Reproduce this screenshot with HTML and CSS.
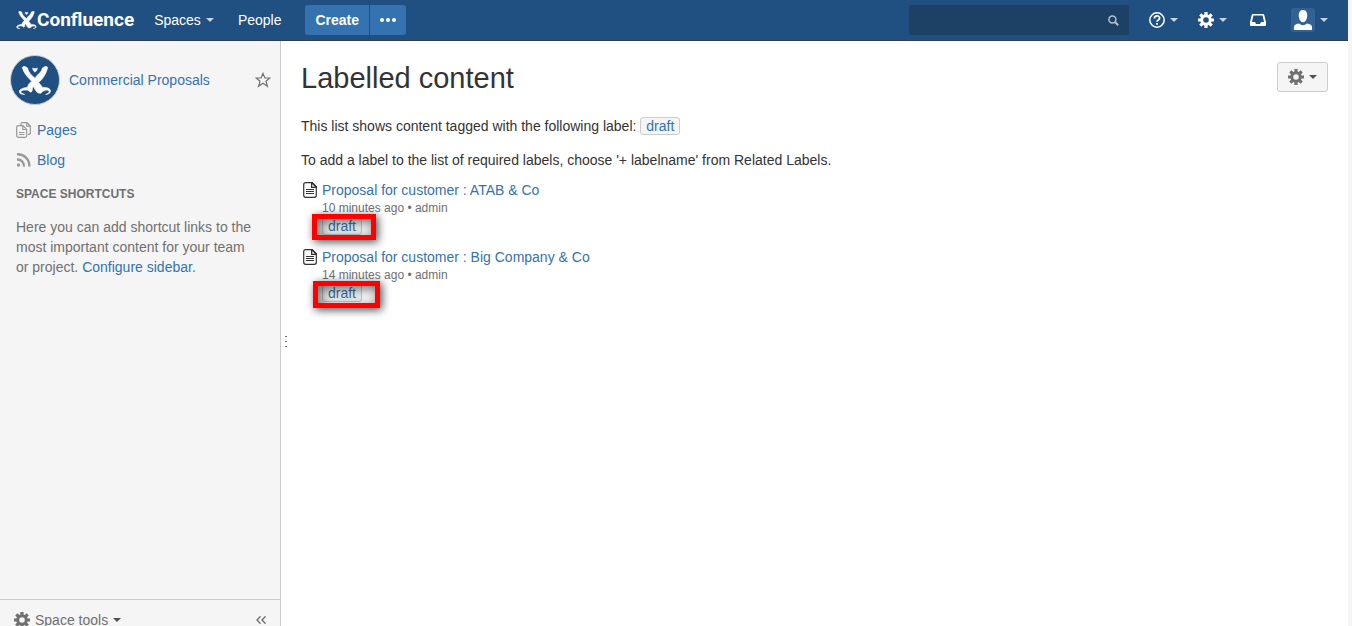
FILE: index.html
```html
<!DOCTYPE html>
<html lang="en">
<head>
<meta charset="utf-8">
<title>Labelled content - Confluence</title>
<link rel="stylesheet" href="styles.css">
</head>
<body>
<svg class="sprite" aria-hidden="true">
  <symbol id="mark" viewBox="16 20 96 86">
    <path fill="currentColor" stroke="currentColor" stroke-width="2" d="M26 24Q27 20 34 21L41 25C44 38 53 48 66 58L87 84C95 84 107 84 110 92C113 100 104 104 96 105C103 102 109 98 106 94C101 90 93 92 85 97L82 101Q74 103 68 96L59 81C55 84 57 90 55 95L51 98L43 92C34 91 25 92 22 95C19 99 25 102 33 105C23 105 15 102 17 94C20 87 33 85 42 83C43 75 48 70 54 65C43 54 30 41 26 24Z"/>
    <path fill="currentColor" stroke="currentColor" stroke-width="2" d="M102 24Q101 20 94 21L87 25C84 35 78 42 68 50L64 58L76 68C89 57 98 41 102 24ZM57 26Q64 29 71 26Q71 33 64 38Q57 33 57 26Z"/>
  </symbol>
  <symbol id="gear" viewBox="0 0 16 16">
    <circle cx="8" cy="8" r="4.3" fill="none" stroke="currentColor" stroke-width="3"/>
    <path fill="none" stroke="currentColor" stroke-width="3.2" d="M8 0V3M8 13V16M0 8H3M13 8H16M2.3 2.3L4.6 4.6M11.4 11.4L13.7 13.7M2.3 13.7L4.6 11.4M11.4 4.6L13.7 2.3"/>
  </symbol>
  <symbol id="page" viewBox="0 0 14 16">
    <path fill="#fff" stroke="currentColor" stroke-width="1.2" d="M2.7 .7H9L13.3 5V13.3Q13.3 15.3 11.3 15.3H2.7Q.7 15.3 .7 13.3V2.7Q.7 .7 2.7 .7Z"/>
    <path fill="currentColor" d="M8 0H9.5L14 4.5V6H8ZM9.3 2V4.7H12Z" fill-rule="evenodd"/>
    <path stroke="currentColor" d="M3 7.500H11M3 9.500H11M3 11.500H11"/>
  </symbol>
</svg>
<header class="topbar">
  <a class="logo" href="#"><svg width="21" height="18"><use href="#mark"/></svg><span>Confluence</span></a>
  <nav class="nav">
    <button class="nav-item" type="button">Spaces<i class="caret"></i></button>
    <a class="nav-item" href="#">People</a>
    <div class="create-group">
      <button class="create" type="button">Create</button>
      <button class="more" type="button" aria-label="Create from template"><svg width="16" height="4" fill="#fff"><circle cx="2" cy="2" r="2"/><circle cx="8" cy="2" r="2"/><circle cx="14" cy="2" r="2"/></svg></button>
    </div>
  </nav>
  <div class="search">
    <input type="search" aria-label="Search">
    <svg class="search-icon" width="11" height="11" viewBox="0 0 11 11" fill="none" stroke="currentColor"><circle cx="4.4" cy="4.4" r="3.5" stroke-width="1.5"/><path d="M7 7L10.2 10.2" stroke-width="2"/></svg>
  </div>
  <div class="tools">
    <button class="tool" type="button" aria-label="Help"><svg width="16" height="16" viewBox="0 0 16 16" fill="none" stroke="#fff"><circle cx="8" cy="8" r="7.2" stroke-width="1.5"/><path stroke-width="1.8" d="M5.4 6.6C5.4 3 10.6 3.1 10.6 6C10.6 8 8 7.8 8 9.8M8 11V12.7"/></svg><i class="caret"></i></button>
    <button class="tool" type="button" aria-label="Administration"><svg width="16" height="16"><use href="#gear"/></svg><i class="caret"></i></button>
    <button class="tool tool-inbox" type="button" aria-label="Notifications"><svg width="16" height="12" viewBox="0 0 16 12"><path fill="#fff" fill-rule="evenodd" d="M3 0H13Q14 0 14.3 1L16 8V11Q16 12 15 12H1Q0 12 0 11V8L1.7 1Q2 0 3 0ZM3.4 1.5L2 8H5L6 10H10L11 8H14L12.6 1.5Z"/></svg></button>
    <button class="tool tool-user" type="button" aria-label="User menu"><svg width="24" height="24" viewBox="0 0 24 24"><rect width="24" height="24" rx="3" fill="#326295"/><path fill="#fff" d="M12 2C17.500 2 17 10 14.500 13Q12 15.500 9.500 13C7 10 6.500 2 12 2ZM3 22V19Q3 16 8 15.500Q12 19 16 15.500Q21 16 21 19V22Z"/></svg><i class="caret"></i></button>
  </div>
</header>
<div class="body">
  <aside class="sidebar">
    <div class="sidebar-main">
      <div class="space">
        <span class="space-logo"><svg width="32" height="29"><use href="#mark"/></svg></span>
        <a href="#">Commercial Proposals</a>
        <button class="star" type="button" aria-label="Favourite"><svg width="16" height="16" viewBox="0 0 16 16"><path fill="none" stroke="#707070" stroke-width="1.200" d="M8 1.400L9.900 6H14.900L11 9.200L12.400 14.300L8 11.300L3.600 14.300L5 9.200L1.100 6H6.100Z"/></svg></button>
      </div>
      <ul class="links">
        <li><svg width="16" height="16" viewBox="0 0 16 16" fill="none" stroke="#999" stroke-width="1.200"><path d="M5 3V2Q5 .7 6.300 .7H11L14.400 4V11Q14.400 12.400 12 12.400M10.700 .7V4.200H14.400"/><path fill="#f5f5f5" d="M2.500 3.700H7L10.700 7.400V13.500Q10.700 15.300 9 15.300H2.500Q.7 15.300 .7 13.500V5.500Q.7 3.700 2.500 3.700ZM6.800 3.700V7.500H10.700M3 10.500H8.500M3 12.500H8.500"/></svg><a href="#">Pages</a></li>
        <li><svg width="16" height="16" viewBox="0 0 16 16" fill="none" stroke="#999" stroke-width="2.300"><circle cx="2.500" cy="13" r="1.700" fill="#999" stroke="none"/><path d="M1 7.500A6.500 6.500 0 0 1 8 14.600M1 2.300A11.500 11.500 0 0 1 13.300 14.600"/></svg><a href="#">Blog</a></li>
      </ul>
      <h2>SPACE SHORTCUTS</h2>
      <p class="hint">Here you can add shortcut links to the most important content for your team or project. <a href="#">Configure sidebar.</a></p>
    </div>
    <div class="sidebar-foot">
      <button class="space-tools" type="button"><svg width="16" height="16"><use href="#gear"/></svg><span>Space tools</span><i class="caret"></i></button>
      <button class="collapse" type="button" aria-label="Collapse sidebar"><svg width="10" height="8" viewBox="0 0 10 8" fill="none" stroke="#707070" stroke-width="1.400"><path d="M4.500 .3L1 4L4.500 7.700M9.500 .3L6 4L9.500 7.700"/></svg></button>
    </div>
  </aside>
  <div class="grip" aria-hidden="true"><i></i><i></i><i></i></div>
  <main class="content">
    <div class="heading">
      <h1>Labelled content</h1>
      <button class="options" type="button" aria-label="Options"><svg width="16" height="16"><use href="#gear"/></svg><i class="caret"></i></button>
    </div>
    <p>This list shows content tagged with the following label: <a class="label" href="#">draft</a></p>
    <p>To add a label to the list of required labels, choose '+ labelname' from Related Labels.</p>
    <ul class="results">
      <li>
        <svg width="14" height="16"><use href="#page"/></svg>
        <div class="result">
          <a href="#">Proposal for customer : ATAB &amp; Co</a>
          <small>10 minutes ago • admin</small>
          <div class="tag"><a class="label" href="#">draft</a><span class="marker"></span></div>
        </div>
      </li>
      <li>
        <svg width="14" height="16"><use href="#page"/></svg>
        <div class="result">
          <a href="#">Proposal for customer : Big Company &amp; Co</a>
          <small>14 minutes ago • admin</small>
          <div class="tag"><a class="label" href="#">draft</a><span class="marker marker-wide"></span></div>
        </div>
      </li>
    </ul>
  </main>
</div>
</body>
</html>
```
FILE: styles.css
```css
* { box-sizing: border-box; }
html { height: 100%; background: #f5f5f5; }
body {
  display: flex;
  flex-direction: column;
  height: 100%;
  margin: 0 4px 0 0;
  overflow: hidden;
  background: #fff;
  color: #333;
  font: 14px/20px "Liberation Sans", Arial, sans-serif;
}
a { color: #3572b0; text-decoration: none; }
button { padding: 0; border: 0; background: none; color: inherit; font: inherit; }
svg { display: block; flex: none; }
ul { margin: 0; padding: 0; list-style: none; }
.sprite { position: absolute; width: 0; height: 0; }
.caret {
  border: 4px solid transparent;
  border-top-color: currentColor;
  border-bottom: 0;
}

.topbar {
  display: flex;
  align-items: center;
  flex: none;
  height: 41px;
  padding: 0 20px 0 16px;
  border-bottom: 1px solid #2e3d54;
  background: #205081;
  color: #fff;
}
.logo {
  display: flex;
  align-items: center;
  color: #fff;
  font: bold 19px/24px Roboto, sans-serif;
}
.nav { display: flex; align-items: center; margin-left: 20px; }
.nav-item { display: flex; align-items: center; gap: 5px; margin-right: 24px; color: #fff; }
.nav-item .caret, .tool .caret { border-top-color: #c7d3e0; }
.create-group { display: flex; gap: 1px; }
.create, .more { height: 30px; background: #3572b0; }
.create { padding: 0 10px; border-radius: 3px 0 0 3px; font-weight: bold; }
.more { padding: 0 10px; border-radius: 0 3px 3px 0; }
.search { position: relative; width: 220px; margin-left: auto; }
.search input {
  display: block;
  width: 100%;
  height: 30px;
  padding: 0 32px 0 10px;
  border: 0;
  border-radius: 3px;
  background: #1c4165;
  color: #fff;
  font: inherit;
}
.search-icon { position: absolute; top: 10px; right: 10px; color: #b4c2d0; }
.tools { display: flex; align-items: center; gap: 20px; margin-left: 20px; }
.tool { display: flex; align-items: center; gap: 5px; }
.tool-inbox { margin: 0 5px 0 3px; }

.body { display: flex; flex: 1; min-height: 0; }
.sidebar {
  display: flex;
  flex-direction: column;
  flex: none;
  width: 281px;
  border-right: 1px solid #ccc;
  background: #f5f5f5;
  color: #707070;
}
.sidebar-main { flex: 1; padding: 14px 10px 0; }
.space { display: flex; align-items: center; gap: 9px; }
.space-logo {
  display: grid;
  place-items: center;
  width: 50px;
  height: 50px;
  border: 1px solid #ccc;
  border-radius: 50%;
  background: #205081;
  color: #fff;
}
.star { margin-left: auto; margin-right: -1px; }
.links { padding: 10px 6px 0; }
.links li { display: flex; align-items: center; gap: 5px; height: 30px; }
.sidebar h2 { margin: 9px 6px 13px; font-size: 12px; line-height: 20px; }
.hint { margin: 0 12px 0 6px; }
.sidebar-foot {
  display: flex;
  justify-content: space-between;
  height: 27px;
  padding: 10px 14px 0;
  border-top: 1px solid #ccc;
}
.space-tools, .collapse { display: flex; align-items: center; height: 20px; }
.space-tools span { margin: 0 5px; }
.grip {
  display: flex;
  flex-direction: column;
  align-self: center;
  gap: 4px;
  width: 10px;
  padding: 16px 0 0 4px;
}
.grip i { width: 2px; height: 1px; background: #707070; }

.content { flex: 1; padding: 21px 20px 0 10px; }
.heading { display: flex; align-items: flex-start; justify-content: space-between; margin-bottom: 21px; }
h1 { margin: 0; font-size: 29px; font-weight: normal; line-height: 33px; }
.options {
  display: flex;
  align-items: center;
  gap: 5px;
  height: 30px;
  padding: 0 10px;
  border: 1px solid #ccc;
  border-radius: 3px;
  background: #f5f5f5;
  color: #707070;
}
.options .caret, .space-tools .caret { border-top-color: #505050; }
.content p { margin: 0 0 14px; }
.label {
  display: inline-block;
  padding: 0 5px;
  border: 1px solid #ccc;
  border-radius: 3px;
  background: #f5f5f5;
  line-height: 16px;
}
.results { margin-top: -4px; }
.results li { display: flex; gap: 5px; margin-bottom: 9px; padding-left: 2px; }
.results svg { margin-top: 2px; }
.result > a, .result small { display: block; }
.result small { color: #707070; font-size: 12px; line-height: 16px; }
.tag { position: relative; height: 22px; line-height: 20px; }
.marker {
  position: absolute;
  top: -2px;
  left: -10px;
  width: 64px;
  height: 26px;
  border: 5px solid #f00;
  box-shadow: 2px 2px 9px rgba(0, 0, 0, .7), inset 3px 3px 12px rgba(0, 0, 0, .6);
}
.marker-wide { left: -9px; width: 67px; height: 27px; }
```
